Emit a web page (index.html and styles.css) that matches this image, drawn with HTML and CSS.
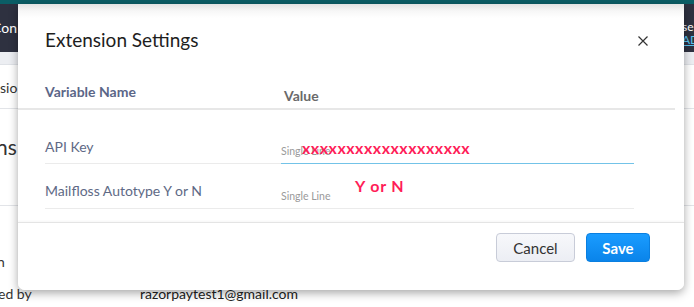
FILE: index.html
```html
<!DOCTYPE html>
<html>
<head>
<meta charset="utf-8">
<link rel="stylesheet" href="styles.css">
</head>
<body>
<div class="page">
  <div class="teal"></div>
  <div class="topbar">
    <span class="tb-left">Con</span>
    <span class="tb-right"><span class="tb-se">se-</span><span class="tb-ad">AD</span></span>
  </div>
  <div class="strip"></div>
  <div class="bg-row r1"><span>sio</span></div>
  <div class="bg-row r2"><span class="big">ns</span></div>
  <div class="bg-rest">
    <div class="bg-n">n</div>
    <div class="bg-by"><span class="by">ed by</span><span class="mail">razorpaytest1@gmail.com</span></div>
  </div>
</div>

<div class="modal">
  <div class="m-head">
    <h1 class="m-title">Extension Settings</h1>
    <svg class="m-close" width="10" height="10" viewBox="0 0 10 10"><path d="M0.5 0.5 L9.5 9.5 M9.5 0.5 L0.5 9.5" stroke="#333" stroke-width="1.2" fill="none"/></svg>
  </div>
  <div class="m-table">
    <div class="t-head">
      <div class="th th-name">Variable Name</div>
      <div class="th th-value">Value</div>
    </div>
    <div class="t-row row-a">
      <div class="td-name">API Key</div>
      <div class="td-value active">
        <span class="ph">Single Line</span>
        <span class="note note-x">xxxxxxxxxxxxxxxxxxx</span>
      </div>
    </div>
    <div class="t-row row-b">
      <div class="td-name">Mailfloss Autotype Y or N</div>
      <div class="td-value">
        <span class="ph">Single Line</span>
        <span class="note note-yn">Y or N</span>
      </div>
    </div>
  </div>
  <div class="m-foot">
    <button class="btn btn-cancel">Cancel</button>
    <button class="btn btn-save">Save</button>
  </div>
</div>
</body>
</html>
```
FILE: styles.css
```css
html, body {
  margin: 0;
  padding: 0;
}
body {
  width: 694px;
  height: 307px;
  overflow: hidden;
  position: relative;
  background: #fff;
  font-family: Lato, "Liberation Sans", sans-serif;
}
.page {
  display: flex;
  flex-direction: column;
  height: 307px;
}
.teal {
  height: 4px;
  background: #0b5e66;
}
.topbar {
  height: 48px;
  background: #2e3140;
  display: flex;
  justify-content: space-between;
  color: #fff;
  font-size: 14px;
}
.tb-left {
  line-height: 48px;
  margin-left: -8px;
}
.tb-right {
  display: flex;
  flex-direction: column;
  width: 12px;
  overflow: hidden;
  font-size: 12px;
  line-height: 13px;
  padding-top: 16px;
}
.tb-ad {
  color: #59c3f0;
  text-decoration: underline;
}
.strip {
  height: 12px;
  background: #eceef2;
  border-bottom: 1px solid #dfe2e7;
}
.bg-row {
  border-bottom: 1px solid #e2e4e8;
  color: #333;
  font-size: 14px;
}
.r1 {
  height: 43px;
  line-height: 46px;
}
.r2 {
  height: 96px;
}
.big {
  display: block;
  font-size: 21px;
  line-height: 24px;
  margin-top: 26px;
  margin-left: -4px;
}
.bg-rest {
  display: flex;
  flex-direction: column;
  color: #333;
  font-size: 14px;
  line-height: 20px;
}
.bg-n {
  margin-top: 46px;
  margin-left: -3px;
}
.bg-by {
  margin-top: 12px;
  display: flex;
  font-size: 14px;
}
.by {
  width: 142px;
  margin-left: -2px;
}
.mail {
  color: #222;
}

/* modal overlay */
.modal {
  position: absolute;
  left: 18px;
  top: 4px;
  width: 666px;
  height: 286px;
  background: linear-gradient(#e2e2e2 0, #f7f7f7 7px, #fff 14px);
  border-radius: 0 0 7px 7px;
  box-shadow: 0 3px 10px rgba(0,0,0,0.35);
  display: flex;
  flex-direction: column;
}
.m-head {
  display: flex;
  justify-content: space-between;
  align-items: center;
  padding: 24px 36px 0 27px;
  height: 24px;
}
.m-title {
  margin: 0;
  font-size: 19px;
  font-weight: 400;
  color: #1e1e1e;
  line-height: 24px;
}
.m-close {
  margin-top: 2px;
}
.m-table {
  width: 657px;
}
.t-head {
  display: flex;
  padding: 30px 0 6px 27px;
  border-bottom: 2px solid #e7e7e7;
  font-size: 14px;
  font-weight: 700;
  line-height: 20px;
}
.th-name {
  width: 239px;
  color: #5b6687;
}
.th-value {
  color: #6a6a6a;
  margin-top: 4px;
  margin-bottom: -4px;
}
.t-row {
  display: flex;
  padding-left: 27px;
}
.td-name {
  width: 236px;
  font-size: 14px;
  line-height: 20px;
  color: #5e6985;
  border-bottom: 1px solid #ebebeb;
}
.td-value {
  width: 353px;
  position: relative;
  border-bottom: 1px solid #ebebeb;
}
.td-value.active {
  border-bottom-color: #73c3e8;
}
.row-a .td-name {
  padding: 27px 0 6px;
}
.row-b .td-name {
  padding: 17px 0 7px;
}
.ph {
  position: absolute;
  left: 0;
  font-size: 10.5px;
  color: #9a9a9a;
  line-height: 14px;
}
.row-a .ph {
  top: 34px;
}
.row-b .ph {
  top: 25px;
}
.note {
  position: absolute;
  color: #ff1d58;
  font-weight: 700;
  white-space: nowrap;
}
.note-x {
  left: 21px;
  top: 29px;
  font-size: 16px;
  line-height: 18px;
  letter-spacing: 0.5px;
}
.note-yn {
  left: 74px;
  top: 12px;
  font-size: 16px;
  line-height: 20px;
  letter-spacing: 0.8px;
}
.m-foot {
  margin-top: 13px;
  border-top: 1px solid #e4e4e4;
  box-shadow: 0 -1px 2px rgba(0,0,0,0.04);
  display: flex;
  justify-content: flex-end;
  gap: 11px;
  padding: 10px 34px 0 0;
}
.btn {
  height: 29px;
  border-radius: 4px;
  font-family: Lato, "Liberation Sans", sans-serif;
  font-size: 15px;
  padding: 0;
  cursor: pointer;
}
.btn-cancel {
  width: 79px;
  background: linear-gradient(#f7f8fb, #eceef4);
  border: 1px solid #c8ccd8;
  color: #333;
}
.btn-save {
  width: 64px;
  background: linear-gradient(#1a9cff, #0a84ea);
  border: 1px solid #0a7fe0;
  color: #fff;
  font-weight: 700;
}
```
